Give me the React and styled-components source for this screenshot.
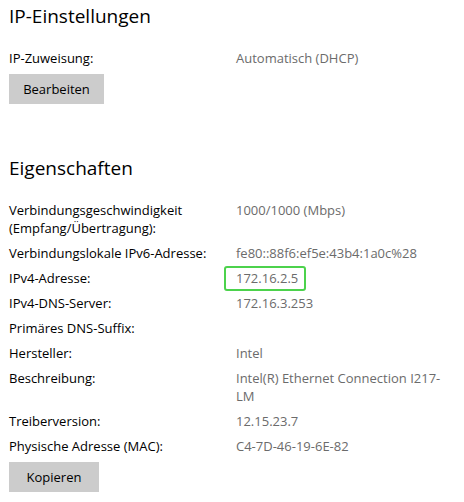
import React from 'react';
import styled, {createGlobalStyle} from 'styled-components';

const GlobalStyle = createGlobalStyle`
  html, body {
    margin: 0;
    padding: 0;
    background: #ffffff;
  }
  body {
    font-family: "Open Sans", "Noto Sans", "Liberation Sans", sans-serif;
    color: #000000;
  }
`;

const props = [
  {label: 'Verbindungsgeschwindigkeit (Empfang/Übertragung):', value: '1000/1000 (Mbps)'},
  {label: 'Verbindungslokale IPv6-Adresse:', value: 'fe80::88f6:ef5e:43b4:1a0c%28'},
  {label: 'IPv4-Adresse:', value: '172.16.2.5', marked: true},
  {label: 'IPv4-DNS-Server:', value: '172.16.3.253'},
  {label: 'Primäres DNS-Suffix:', value: ''},
  {label: 'Hersteller:', value: 'Intel'},
  {label: 'Beschreibung:', value: 'Intel(R) Ethernet Connection I217-LM'},
  {label: 'Treiberversion:', value: '12.15.23.7'},
  {label: 'Physische Adresse (MAC):', value: 'C4-7D-46-19-6E-82'},
];

const App = () => {
  return(
    <Page>
      <GlobalStyle />
      <Section>
        <Title>IP-Einstellungen</Title>
        <Table>
          <Label>IP-Zuweisung:</Label>
          <Value>Automatisch (DHCP)</Value>
        </Table>
        <Button $w={95}>Bearbeiten</Button>
      </Section>
      <Section $top={50}>
        <Title>Eigenschaften</Title>
        <Table>
          {props.map((p) => (
            <React.Fragment key={p.label}>
              <Label>{p.label}</Label>
              <Value $marked={p.marked}>{p.value}</Value>
            </React.Fragment>
          ))}
        </Table>
        <Button $w={90}>Kopieren</Button>
      </Section>
    </Page>
  );
}

export default App;

const Page = styled.div`
    padding: 2px 9px 10px 9px;
    width: 464px;
    box-sizing: border-box;
    `;

const Section = styled.div`
    margin-top: ${p => p.$top || 0}px;
    display: flex;
    flex-direction: column;
    align-items: flex-start;
    `;

const Title = styled.div`
    font-size: 19px;
    line-height: 28px;
    font-weight: 400;
    margin-bottom: 19px;
    `;

const Table = styled.div`
    display: grid;
    grid-template-columns: 227px 1fr;
    row-gap: 7px;
    font-size: 13px;
    line-height: 18px;
    width: 100%;
    `;

const Label = styled.div`
    color: #000000;
    padding-right: 10px;
    `;

const Value = styled.div`
    color: #6b6b6b;
    justify-self: start;
    position: relative;
    padding-right: 8px;
    ${p => p.$marked && `
      &::before {
        content: '';
        position: absolute;
        left: -12px;
        right: 0;
        top: -3px;
        bottom: -4px;
        border: 2px solid #4cd24c;
        border-radius: 3px;
      }
    `}
    `;

const Button = styled.button`
    margin-top: 7px;
    width: ${p => p.$w}px;
    height: 30px;
    border: none;
    background: #cccccc;
    font-family: inherit;
    font-size: 13px;
    color: #000000;
    padding: 0;
    `;
